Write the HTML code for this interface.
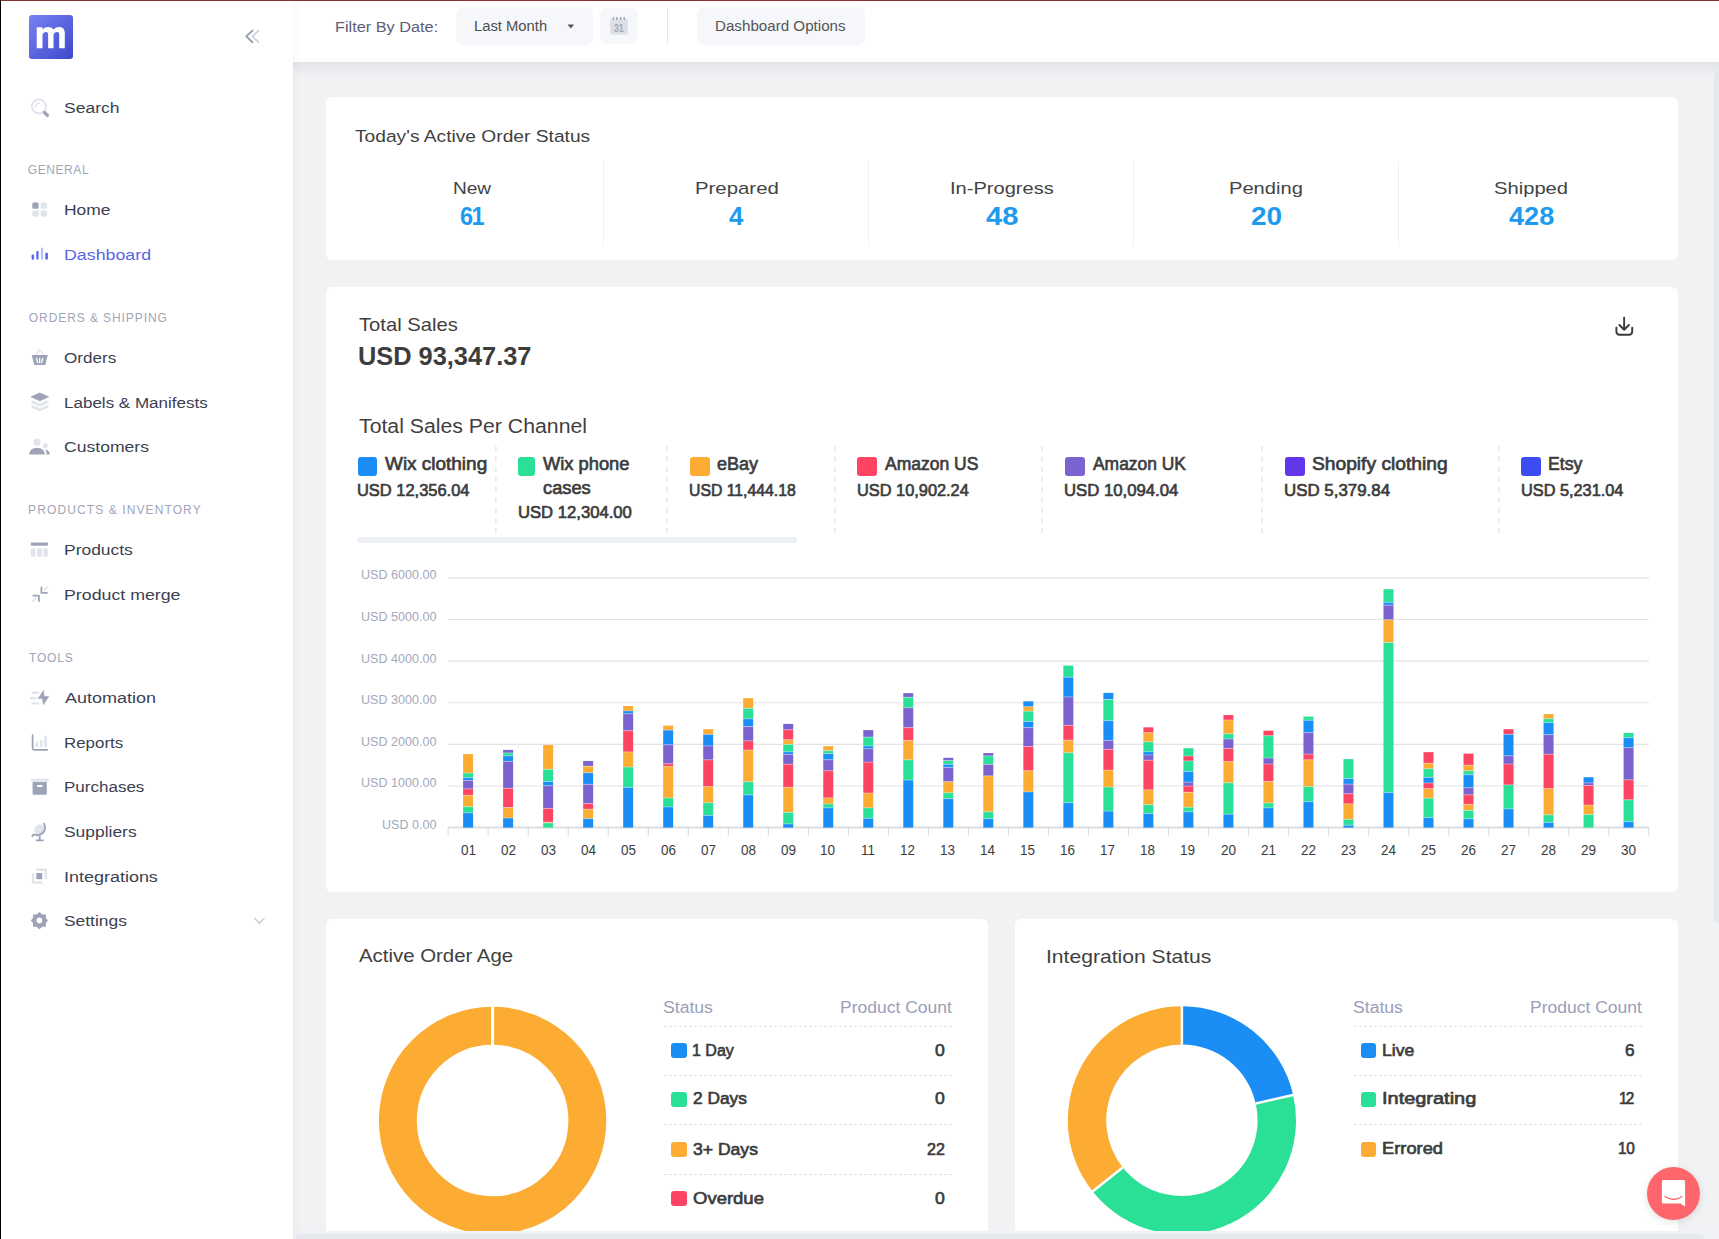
<!DOCTYPE html><html><head><meta charset="utf-8"><style>
html,body{margin:0;padding:0;}
body{width:1719px;height:1239px;overflow:hidden;position:relative;background:#f1f2f4;font-family:'Liberation Sans',sans-serif;}
.abs{position:absolute;}
.t{position:absolute;line-height:1;white-space:nowrap;transform-origin:0 0;font-family:'Liberation Sans',sans-serif;}
.card{position:absolute;background:#fff;border-radius:6px;}
.btn{position:absolute;background:#f6f7fa;border-radius:7px;}

</style></head><body>
<div class="abs" style="left:293px;top:62px;width:1426px;height:14px;background:linear-gradient(#e3e4e8,#f0f1f4)"></div>
<div class="card" style="left:326px;top:97px;width:1352px;height:163px"></div>
<div class="card" style="left:326px;top:287px;width:1352px;height:605px"></div>
<div class="card" style="left:326px;top:919px;width:662px;height:330px"></div>
<div class="card" style="left:1015px;top:919px;width:663px;height:330px"></div>
<div class="abs" style="left:603.0px;top:161px;width:1px;height:85px;background:#eef0f5"></div>
<div class="abs" style="left:867.9px;top:161px;width:1px;height:85px;background:#eef0f5"></div>
<div class="abs" style="left:1133.0px;top:161px;width:1px;height:85px;background:#eef0f5"></div>
<div class="abs" style="left:1397.8px;top:161px;width:1px;height:85px;background:#eef0f5"></div>
<svg class="abs" style="left:0;top:0" width="1719" height="600"><line x1="495.9" y1="446" x2="495.9" y2="536" stroke="#e3e6ec" stroke-width="1.4" stroke-dasharray="5.6 4.65"/><line x1="666.9" y1="446" x2="666.9" y2="536" stroke="#e3e6ec" stroke-width="1.4" stroke-dasharray="5.6 4.65"/><line x1="835.1" y1="446" x2="835.1" y2="536" stroke="#e3e6ec" stroke-width="1.4" stroke-dasharray="5.6 4.65"/><line x1="1041.9" y1="446" x2="1041.9" y2="536" stroke="#e3e6ec" stroke-width="1.4" stroke-dasharray="5.6 4.65"/><line x1="1262.0" y1="446" x2="1262.0" y2="536" stroke="#e3e6ec" stroke-width="1.4" stroke-dasharray="5.6 4.65"/><line x1="1498.8" y1="446" x2="1498.8" y2="536" stroke="#e3e6ec" stroke-width="1.4" stroke-dasharray="5.6 4.65"/></svg>
<div class="abs" style="left:358px;top:457px;width:19px;height:19px;border-radius:3px;background:#1a8ef5"></div>
<div class="abs" style="left:518px;top:457px;width:17px;height:19px;border-radius:3px;background:#2adf96"></div>
<div class="abs" style="left:690px;top:457px;width:20px;height:19px;border-radius:3px;background:#fcab33"></div>
<div class="abs" style="left:857px;top:457px;width:20px;height:19px;border-radius:3px;background:#fd4563"></div>
<div class="abs" style="left:1065px;top:457px;width:20px;height:19px;border-radius:3px;background:#7a62cf"></div>
<div class="abs" style="left:1285px;top:457px;width:20px;height:19px;border-radius:3px;background:#6236ea"></div>
<div class="abs" style="left:1521px;top:457px;width:20px;height:19px;border-radius:3px;background:#3d4cf2"></div>
<div class="abs" style="left:357px;top:537px;width:440px;height:6px;border-radius:3px;background:#eceff3"></div>
<svg class="abs" style="left:0;top:0" width="1719" height="1239"><line x1="448" y1="827.60" x2="1649" y2="827.60" stroke="#dedede" stroke-width="2"/><line x1="448" y1="785.98" x2="1649" y2="785.98" stroke="#e3e3e3" stroke-width="1.2"/><line x1="448" y1="744.36" x2="1649" y2="744.36" stroke="#e3e3e3" stroke-width="1.2"/><line x1="448" y1="702.74" x2="1649" y2="702.74" stroke="#e3e3e3" stroke-width="1.2"/><line x1="448" y1="661.12" x2="1649" y2="661.12" stroke="#e3e3e3" stroke-width="1.2"/><line x1="448" y1="619.50" x2="1649" y2="619.50" stroke="#e3e3e3" stroke-width="1.2"/><line x1="448" y1="577.88" x2="1649" y2="577.88" stroke="#e3e3e3" stroke-width="1.2"/><line x1="448.2" y1="827.60" x2="448.2" y2="835.60" stroke="#dedede" stroke-width="1.2"/><line x1="488.217" y1="827.60" x2="488.217" y2="835.60" stroke="#dedede" stroke-width="1.2"/><line x1="528.234" y1="827.60" x2="528.234" y2="835.60" stroke="#dedede" stroke-width="1.2"/><line x1="568.251" y1="827.60" x2="568.251" y2="835.60" stroke="#dedede" stroke-width="1.2"/><line x1="608.268" y1="827.60" x2="608.268" y2="835.60" stroke="#dedede" stroke-width="1.2"/><line x1="648.285" y1="827.60" x2="648.285" y2="835.60" stroke="#dedede" stroke-width="1.2"/><line x1="688.302" y1="827.60" x2="688.302" y2="835.60" stroke="#dedede" stroke-width="1.2"/><line x1="728.319" y1="827.60" x2="728.319" y2="835.60" stroke="#dedede" stroke-width="1.2"/><line x1="768.336" y1="827.60" x2="768.336" y2="835.60" stroke="#dedede" stroke-width="1.2"/><line x1="808.3530000000001" y1="827.60" x2="808.3530000000001" y2="835.60" stroke="#dedede" stroke-width="1.2"/><line x1="848.37" y1="827.60" x2="848.37" y2="835.60" stroke="#dedede" stroke-width="1.2"/><line x1="888.387" y1="827.60" x2="888.387" y2="835.60" stroke="#dedede" stroke-width="1.2"/><line x1="928.404" y1="827.60" x2="928.404" y2="835.60" stroke="#dedede" stroke-width="1.2"/><line x1="968.421" y1="827.60" x2="968.421" y2="835.60" stroke="#dedede" stroke-width="1.2"/><line x1="1008.4380000000001" y1="827.60" x2="1008.4380000000001" y2="835.60" stroke="#dedede" stroke-width="1.2"/><line x1="1048.455" y1="827.60" x2="1048.455" y2="835.60" stroke="#dedede" stroke-width="1.2"/><line x1="1088.472" y1="827.60" x2="1088.472" y2="835.60" stroke="#dedede" stroke-width="1.2"/><line x1="1128.489" y1="827.60" x2="1128.489" y2="835.60" stroke="#dedede" stroke-width="1.2"/><line x1="1168.506" y1="827.60" x2="1168.506" y2="835.60" stroke="#dedede" stroke-width="1.2"/><line x1="1208.5230000000001" y1="827.60" x2="1208.5230000000001" y2="835.60" stroke="#dedede" stroke-width="1.2"/><line x1="1248.54" y1="827.60" x2="1248.54" y2="835.60" stroke="#dedede" stroke-width="1.2"/><line x1="1288.557" y1="827.60" x2="1288.557" y2="835.60" stroke="#dedede" stroke-width="1.2"/><line x1="1328.574" y1="827.60" x2="1328.574" y2="835.60" stroke="#dedede" stroke-width="1.2"/><line x1="1368.5910000000001" y1="827.60" x2="1368.5910000000001" y2="835.60" stroke="#dedede" stroke-width="1.2"/><line x1="1408.6080000000002" y1="827.60" x2="1408.6080000000002" y2="835.60" stroke="#dedede" stroke-width="1.2"/><line x1="1448.625" y1="827.60" x2="1448.625" y2="835.60" stroke="#dedede" stroke-width="1.2"/><line x1="1488.642" y1="827.60" x2="1488.642" y2="835.60" stroke="#dedede" stroke-width="1.2"/><line x1="1528.659" y1="827.60" x2="1528.659" y2="835.60" stroke="#dedede" stroke-width="1.2"/><line x1="1568.6760000000002" y1="827.60" x2="1568.6760000000002" y2="835.60" stroke="#dedede" stroke-width="1.2"/><line x1="1608.6930000000002" y1="827.60" x2="1608.6930000000002" y2="835.60" stroke="#dedede" stroke-width="1.2"/><line x1="1648.71" y1="827.60" x2="1648.71" y2="835.60" stroke="#dedede" stroke-width="1.2"/><rect x="463.1" y="754.07" width="10" height="18.98" fill="#fcab33"/><rect x="463.1" y="773.05" width="10" height="4.52" fill="#2adf96"/><rect x="463.1" y="777.57" width="10" height="2.82" fill="#1a8ef5"/><rect x="463.1" y="780.40" width="10" height="8.47" fill="#7a62cf"/><rect x="463.1" y="788.87" width="10" height="6.55" fill="#fd4563"/><rect x="463.1" y="795.42" width="10" height="11.30" fill="#fcab33"/><rect x="463.1" y="806.72" width="10" height="6.10" fill="#2adf96"/><rect x="463.1" y="812.82" width="10" height="14.78" fill="#1a8ef5"/><rect x="463.1" y="772.55" width="10" height="1" fill="#ffffff" fill-opacity="0.35"/><rect x="463.1" y="777.07" width="10" height="1" fill="#ffffff" fill-opacity="0.35"/><rect x="463.1" y="779.90" width="10" height="1" fill="#ffffff" fill-opacity="0.35"/><rect x="463.1" y="788.37" width="10" height="1" fill="#ffffff" fill-opacity="0.35"/><rect x="463.1" y="794.92" width="10" height="1" fill="#ffffff" fill-opacity="0.35"/><rect x="463.1" y="806.22" width="10" height="1" fill="#ffffff" fill-opacity="0.35"/><rect x="463.1" y="812.32" width="10" height="1" fill="#ffffff" fill-opacity="0.35"/><rect x="503.117" y="749.89" width="10" height="3.05" fill="#7a62cf"/><rect x="503.117" y="752.94" width="10" height="2.94" fill="#2adf96"/><rect x="503.117" y="755.88" width="10" height="5.54" fill="#1a8ef5"/><rect x="503.117" y="761.41" width="10" height="26.89" fill="#7a62cf"/><rect x="503.117" y="788.31" width="10" height="19.21" fill="#fd4563"/><rect x="503.117" y="807.51" width="10" height="10.51" fill="#fcab33"/><rect x="503.117" y="818.02" width="10" height="9.58" fill="#1a8ef5"/><rect x="503.117" y="752.44" width="10" height="1" fill="#ffffff" fill-opacity="0.35"/><rect x="503.117" y="755.38" width="10" height="1" fill="#ffffff" fill-opacity="0.35"/><rect x="503.117" y="760.91" width="10" height="1" fill="#ffffff" fill-opacity="0.35"/><rect x="503.117" y="787.81" width="10" height="1" fill="#ffffff" fill-opacity="0.35"/><rect x="503.117" y="807.01" width="10" height="1" fill="#ffffff" fill-opacity="0.35"/><rect x="503.117" y="817.52" width="10" height="1" fill="#ffffff" fill-opacity="0.35"/><rect x="543.134" y="745.03" width="10" height="24.29" fill="#fcab33"/><rect x="543.134" y="769.32" width="10" height="12.20" fill="#2adf96"/><rect x="543.134" y="781.53" width="10" height="4.18" fill="#1a8ef5"/><rect x="543.134" y="785.71" width="10" height="22.71" fill="#7a62cf"/><rect x="543.134" y="808.42" width="10" height="13.79" fill="#fd4563"/><rect x="543.134" y="822.20" width="10" height="0.79" fill="#fcab33"/><rect x="543.134" y="822.99" width="10" height="4.61" fill="#2adf96"/><rect x="543.134" y="768.82" width="10" height="1" fill="#ffffff" fill-opacity="0.35"/><rect x="543.134" y="781.03" width="10" height="1" fill="#ffffff" fill-opacity="0.35"/><rect x="543.134" y="785.21" width="10" height="1" fill="#ffffff" fill-opacity="0.35"/><rect x="543.134" y="807.92" width="10" height="1" fill="#ffffff" fill-opacity="0.35"/><rect x="543.134" y="821.70" width="10" height="1" fill="#ffffff" fill-opacity="0.35"/><rect x="543.134" y="822.49" width="10" height="1" fill="#ffffff" fill-opacity="0.35"/><rect x="583.1510000000001" y="760.96" width="10" height="5.31" fill="#7a62cf"/><rect x="583.1510000000001" y="766.27" width="10" height="6.55" fill="#fcab33"/><rect x="583.1510000000001" y="772.82" width="10" height="11.53" fill="#1a8ef5"/><rect x="583.1510000000001" y="784.35" width="10" height="19.21" fill="#7a62cf"/><rect x="583.1510000000001" y="803.56" width="10" height="5.65" fill="#fd4563"/><rect x="583.1510000000001" y="809.21" width="10" height="9.38" fill="#fcab33"/><rect x="583.1510000000001" y="818.59" width="10" height="9.01" fill="#1a8ef5"/><rect x="583.1510000000001" y="765.77" width="10" height="1" fill="#ffffff" fill-opacity="0.35"/><rect x="583.1510000000001" y="772.32" width="10" height="1" fill="#ffffff" fill-opacity="0.35"/><rect x="583.1510000000001" y="783.85" width="10" height="1" fill="#ffffff" fill-opacity="0.35"/><rect x="583.1510000000001" y="803.06" width="10" height="1" fill="#ffffff" fill-opacity="0.35"/><rect x="583.1510000000001" y="808.71" width="10" height="1" fill="#ffffff" fill-opacity="0.35"/><rect x="583.1510000000001" y="818.09" width="10" height="1" fill="#ffffff" fill-opacity="0.35"/><rect x="623.168" y="706.05" width="10" height="4.86" fill="#fcab33"/><rect x="623.168" y="710.90" width="10" height="2.82" fill="#1a8ef5"/><rect x="623.168" y="713.73" width="10" height="16.95" fill="#7a62cf"/><rect x="623.168" y="730.68" width="10" height="21.24" fill="#fd4563"/><rect x="623.168" y="751.92" width="10" height="15.14" fill="#fcab33"/><rect x="623.168" y="767.06" width="10" height="20.34" fill="#2adf96"/><rect x="623.168" y="787.40" width="10" height="40.20" fill="#1a8ef5"/><rect x="623.168" y="710.40" width="10" height="1" fill="#ffffff" fill-opacity="0.35"/><rect x="623.168" y="713.23" width="10" height="1" fill="#ffffff" fill-opacity="0.35"/><rect x="623.168" y="730.18" width="10" height="1" fill="#ffffff" fill-opacity="0.35"/><rect x="623.168" y="751.42" width="10" height="1" fill="#ffffff" fill-opacity="0.35"/><rect x="623.168" y="766.56" width="10" height="1" fill="#ffffff" fill-opacity="0.35"/><rect x="623.168" y="786.90" width="10" height="1" fill="#ffffff" fill-opacity="0.35"/><rect x="663.1850000000001" y="725.59" width="10" height="4.52" fill="#fcab33"/><rect x="663.1850000000001" y="730.11" width="10" height="14.69" fill="#1a8ef5"/><rect x="663.1850000000001" y="744.80" width="10" height="18.98" fill="#7a62cf"/><rect x="663.1850000000001" y="763.79" width="10" height="2.82" fill="#fd4563"/><rect x="663.1850000000001" y="766.61" width="10" height="31.30" fill="#fcab33"/><rect x="663.1850000000001" y="797.91" width="10" height="9.04" fill="#2adf96"/><rect x="663.1850000000001" y="806.95" width="10" height="20.65" fill="#1a8ef5"/><rect x="663.1850000000001" y="729.61" width="10" height="1" fill="#ffffff" fill-opacity="0.35"/><rect x="663.1850000000001" y="744.30" width="10" height="1" fill="#ffffff" fill-opacity="0.35"/><rect x="663.1850000000001" y="763.29" width="10" height="1" fill="#ffffff" fill-opacity="0.35"/><rect x="663.1850000000001" y="766.11" width="10" height="1" fill="#ffffff" fill-opacity="0.35"/><rect x="663.1850000000001" y="797.41" width="10" height="1" fill="#ffffff" fill-opacity="0.35"/><rect x="663.1850000000001" y="806.45" width="10" height="1" fill="#ffffff" fill-opacity="0.35"/><rect x="703.202" y="729.21" width="10" height="5.20" fill="#fcab33"/><rect x="703.202" y="734.41" width="10" height="11.53" fill="#1a8ef5"/><rect x="703.202" y="745.93" width="10" height="13.90" fill="#7a62cf"/><rect x="703.202" y="759.83" width="10" height="26.78" fill="#fd4563"/><rect x="703.202" y="786.61" width="10" height="16.16" fill="#fcab33"/><rect x="703.202" y="802.77" width="10" height="12.66" fill="#2adf96"/><rect x="703.202" y="815.42" width="10" height="12.18" fill="#1a8ef5"/><rect x="703.202" y="733.91" width="10" height="1" fill="#ffffff" fill-opacity="0.35"/><rect x="703.202" y="745.43" width="10" height="1" fill="#ffffff" fill-opacity="0.35"/><rect x="703.202" y="759.33" width="10" height="1" fill="#ffffff" fill-opacity="0.35"/><rect x="703.202" y="786.11" width="10" height="1" fill="#ffffff" fill-opacity="0.35"/><rect x="703.202" y="802.27" width="10" height="1" fill="#ffffff" fill-opacity="0.35"/><rect x="703.202" y="814.92" width="10" height="1" fill="#ffffff" fill-opacity="0.35"/><rect x="743.219" y="698.14" width="10" height="10.17" fill="#fcab33"/><rect x="743.219" y="708.31" width="10" height="10.51" fill="#2adf96"/><rect x="743.219" y="718.81" width="10" height="7.68" fill="#1a8ef5"/><rect x="743.219" y="726.50" width="10" height="14.35" fill="#7a62cf"/><rect x="743.219" y="740.85" width="10" height="9.27" fill="#fd4563"/><rect x="743.219" y="750.11" width="10" height="31.64" fill="#fcab33"/><rect x="743.219" y="781.75" width="10" height="13.11" fill="#2adf96"/><rect x="743.219" y="794.86" width="10" height="32.74" fill="#1a8ef5"/><rect x="743.219" y="707.81" width="10" height="1" fill="#ffffff" fill-opacity="0.35"/><rect x="743.219" y="718.31" width="10" height="1" fill="#ffffff" fill-opacity="0.35"/><rect x="743.219" y="726.00" width="10" height="1" fill="#ffffff" fill-opacity="0.35"/><rect x="743.219" y="740.35" width="10" height="1" fill="#ffffff" fill-opacity="0.35"/><rect x="743.219" y="749.61" width="10" height="1" fill="#ffffff" fill-opacity="0.35"/><rect x="743.219" y="781.25" width="10" height="1" fill="#ffffff" fill-opacity="0.35"/><rect x="743.219" y="794.36" width="10" height="1" fill="#ffffff" fill-opacity="0.35"/><rect x="783.2360000000001" y="723.90" width="10" height="5.88" fill="#7a62cf"/><rect x="783.2360000000001" y="729.77" width="10" height="9.94" fill="#fd4563"/><rect x="783.2360000000001" y="739.72" width="10" height="4.75" fill="#fcab33"/><rect x="783.2360000000001" y="744.46" width="10" height="7.34" fill="#2adf96"/><rect x="783.2360000000001" y="751.81" width="10" height="2.60" fill="#1a8ef5"/><rect x="783.2360000000001" y="754.41" width="10" height="9.83" fill="#7a62cf"/><rect x="783.2360000000001" y="764.24" width="10" height="23.16" fill="#fd4563"/><rect x="783.2360000000001" y="787.40" width="10" height="24.97" fill="#fcab33"/><rect x="783.2360000000001" y="812.37" width="10" height="11.53" fill="#2adf96"/><rect x="783.2360000000001" y="823.90" width="10" height="3.70" fill="#1a8ef5"/><rect x="783.2360000000001" y="729.27" width="10" height="1" fill="#ffffff" fill-opacity="0.35"/><rect x="783.2360000000001" y="739.22" width="10" height="1" fill="#ffffff" fill-opacity="0.35"/><rect x="783.2360000000001" y="743.96" width="10" height="1" fill="#ffffff" fill-opacity="0.35"/><rect x="783.2360000000001" y="751.31" width="10" height="1" fill="#ffffff" fill-opacity="0.35"/><rect x="783.2360000000001" y="753.91" width="10" height="1" fill="#ffffff" fill-opacity="0.35"/><rect x="783.2360000000001" y="763.74" width="10" height="1" fill="#ffffff" fill-opacity="0.35"/><rect x="783.2360000000001" y="786.90" width="10" height="1" fill="#ffffff" fill-opacity="0.35"/><rect x="783.2360000000001" y="811.87" width="10" height="1" fill="#ffffff" fill-opacity="0.35"/><rect x="783.2360000000001" y="823.40" width="10" height="1" fill="#ffffff" fill-opacity="0.35"/><rect x="823.253" y="746.16" width="10" height="4.52" fill="#fcab33"/><rect x="823.253" y="750.68" width="10" height="2.94" fill="#2adf96"/><rect x="823.253" y="753.62" width="10" height="6.10" fill="#1a8ef5"/><rect x="823.253" y="759.72" width="10" height="11.07" fill="#7a62cf"/><rect x="823.253" y="770.79" width="10" height="27.12" fill="#fd4563"/><rect x="823.253" y="797.91" width="10" height="5.99" fill="#fcab33"/><rect x="823.253" y="803.90" width="10" height="3.95" fill="#2adf96"/><rect x="823.253" y="807.85" width="10" height="19.75" fill="#1a8ef5"/><rect x="823.253" y="750.18" width="10" height="1" fill="#ffffff" fill-opacity="0.35"/><rect x="823.253" y="753.12" width="10" height="1" fill="#ffffff" fill-opacity="0.35"/><rect x="823.253" y="759.22" width="10" height="1" fill="#ffffff" fill-opacity="0.35"/><rect x="823.253" y="770.29" width="10" height="1" fill="#ffffff" fill-opacity="0.35"/><rect x="823.253" y="797.41" width="10" height="1" fill="#ffffff" fill-opacity="0.35"/><rect x="823.253" y="803.40" width="10" height="1" fill="#ffffff" fill-opacity="0.35"/><rect x="823.253" y="807.35" width="10" height="1" fill="#ffffff" fill-opacity="0.35"/><rect x="863.27" y="730.11" width="10" height="7.01" fill="#7a62cf"/><rect x="863.27" y="737.12" width="10" height="8.81" fill="#2adf96"/><rect x="863.27" y="745.93" width="10" height="2.82" fill="#1a8ef5"/><rect x="863.27" y="748.76" width="10" height="13.33" fill="#7a62cf"/><rect x="863.27" y="762.09" width="10" height="30.96" fill="#fd4563"/><rect x="863.27" y="793.05" width="10" height="14.80" fill="#fcab33"/><rect x="863.27" y="807.85" width="10" height="10.40" fill="#2adf96"/><rect x="863.27" y="818.25" width="10" height="9.35" fill="#1a8ef5"/><rect x="863.27" y="736.62" width="10" height="1" fill="#ffffff" fill-opacity="0.35"/><rect x="863.27" y="745.43" width="10" height="1" fill="#ffffff" fill-opacity="0.35"/><rect x="863.27" y="748.26" width="10" height="1" fill="#ffffff" fill-opacity="0.35"/><rect x="863.27" y="761.59" width="10" height="1" fill="#ffffff" fill-opacity="0.35"/><rect x="863.27" y="792.55" width="10" height="1" fill="#ffffff" fill-opacity="0.35"/><rect x="863.27" y="807.35" width="10" height="1" fill="#ffffff" fill-opacity="0.35"/><rect x="863.27" y="817.75" width="10" height="1" fill="#ffffff" fill-opacity="0.35"/><rect x="903.287" y="693.16" width="10" height="4.18" fill="#7a62cf"/><rect x="903.287" y="697.34" width="10" height="10.40" fill="#2adf96"/><rect x="903.287" y="707.74" width="10" height="19.89" fill="#7a62cf"/><rect x="903.287" y="727.63" width="10" height="12.88" fill="#fd4563"/><rect x="903.287" y="740.51" width="10" height="19.32" fill="#fcab33"/><rect x="903.287" y="759.83" width="10" height="20.23" fill="#2adf96"/><rect x="903.287" y="780.06" width="10" height="47.54" fill="#1a8ef5"/><rect x="903.287" y="696.84" width="10" height="1" fill="#ffffff" fill-opacity="0.35"/><rect x="903.287" y="707.24" width="10" height="1" fill="#ffffff" fill-opacity="0.35"/><rect x="903.287" y="727.13" width="10" height="1" fill="#ffffff" fill-opacity="0.35"/><rect x="903.287" y="740.01" width="10" height="1" fill="#ffffff" fill-opacity="0.35"/><rect x="903.287" y="759.33" width="10" height="1" fill="#ffffff" fill-opacity="0.35"/><rect x="903.287" y="779.56" width="10" height="1" fill="#ffffff" fill-opacity="0.35"/><rect x="943.3040000000001" y="757.80" width="10" height="2.82" fill="#7a62cf"/><rect x="943.3040000000001" y="760.62" width="10" height="3.73" fill="#2adf96"/><rect x="943.3040000000001" y="764.35" width="10" height="3.05" fill="#1a8ef5"/><rect x="943.3040000000001" y="767.40" width="10" height="14.35" fill="#7a62cf"/><rect x="943.3040000000001" y="781.75" width="10" height="11.07" fill="#fcab33"/><rect x="943.3040000000001" y="792.82" width="10" height="5.88" fill="#2adf96"/><rect x="943.3040000000001" y="798.70" width="10" height="28.90" fill="#1a8ef5"/><rect x="943.3040000000001" y="760.12" width="10" height="1" fill="#ffffff" fill-opacity="0.35"/><rect x="943.3040000000001" y="763.85" width="10" height="1" fill="#ffffff" fill-opacity="0.35"/><rect x="943.3040000000001" y="766.90" width="10" height="1" fill="#ffffff" fill-opacity="0.35"/><rect x="943.3040000000001" y="781.25" width="10" height="1" fill="#ffffff" fill-opacity="0.35"/><rect x="943.3040000000001" y="792.32" width="10" height="1" fill="#ffffff" fill-opacity="0.35"/><rect x="943.3040000000001" y="798.20" width="10" height="1" fill="#ffffff" fill-opacity="0.35"/><rect x="983.321" y="753.05" width="10" height="2.82" fill="#7a62cf"/><rect x="983.321" y="755.88" width="10" height="8.47" fill="#2adf96"/><rect x="983.321" y="764.35" width="10" height="11.53" fill="#7a62cf"/><rect x="983.321" y="775.88" width="10" height="35.93" fill="#fcab33"/><rect x="983.321" y="811.81" width="10" height="6.78" fill="#2adf96"/><rect x="983.321" y="818.59" width="10" height="9.01" fill="#1a8ef5"/><rect x="983.321" y="755.38" width="10" height="1" fill="#ffffff" fill-opacity="0.35"/><rect x="983.321" y="763.85" width="10" height="1" fill="#ffffff" fill-opacity="0.35"/><rect x="983.321" y="775.38" width="10" height="1" fill="#ffffff" fill-opacity="0.35"/><rect x="983.321" y="811.31" width="10" height="1" fill="#ffffff" fill-opacity="0.35"/><rect x="983.321" y="818.09" width="10" height="1" fill="#ffffff" fill-opacity="0.35"/><rect x="1023.3380000000001" y="701.30" width="10" height="5.42" fill="#1a8ef5"/><rect x="1023.3380000000001" y="706.72" width="10" height="4.41" fill="#fcab33"/><rect x="1023.3380000000001" y="711.13" width="10" height="10.28" fill="#2adf96"/><rect x="1023.3380000000001" y="721.41" width="10" height="6.21" fill="#1a8ef5"/><rect x="1023.3380000000001" y="727.63" width="10" height="18.87" fill="#7a62cf"/><rect x="1023.3380000000001" y="746.50" width="10" height="24.29" fill="#fd4563"/><rect x="1023.3380000000001" y="770.79" width="10" height="21.13" fill="#fcab33"/><rect x="1023.3380000000001" y="791.92" width="10" height="35.68" fill="#1a8ef5"/><rect x="1023.3380000000001" y="706.22" width="10" height="1" fill="#ffffff" fill-opacity="0.35"/><rect x="1023.3380000000001" y="710.63" width="10" height="1" fill="#ffffff" fill-opacity="0.35"/><rect x="1023.3380000000001" y="720.91" width="10" height="1" fill="#ffffff" fill-opacity="0.35"/><rect x="1023.3380000000001" y="727.13" width="10" height="1" fill="#ffffff" fill-opacity="0.35"/><rect x="1023.3380000000001" y="746.00" width="10" height="1" fill="#ffffff" fill-opacity="0.35"/><rect x="1023.3380000000001" y="770.29" width="10" height="1" fill="#ffffff" fill-opacity="0.35"/><rect x="1023.3380000000001" y="791.42" width="10" height="1" fill="#ffffff" fill-opacity="0.35"/><rect x="1063.355" y="665.59" width="10" height="11.58" fill="#2adf96"/><rect x="1063.355" y="677.18" width="10" height="19.77" fill="#1a8ef5"/><rect x="1063.355" y="696.95" width="10" height="28.39" fill="#7a62cf"/><rect x="1063.355" y="725.34" width="10" height="14.83" fill="#fd4563"/><rect x="1063.355" y="740.17" width="10" height="12.57" fill="#fcab33"/><rect x="1063.355" y="752.74" width="10" height="49.86" fill="#2adf96"/><rect x="1063.355" y="802.60" width="10" height="25.00" fill="#1a8ef5"/><rect x="1063.355" y="676.68" width="10" height="1" fill="#ffffff" fill-opacity="0.35"/><rect x="1063.355" y="696.45" width="10" height="1" fill="#ffffff" fill-opacity="0.35"/><rect x="1063.355" y="724.84" width="10" height="1" fill="#ffffff" fill-opacity="0.35"/><rect x="1063.355" y="739.67" width="10" height="1" fill="#ffffff" fill-opacity="0.35"/><rect x="1063.355" y="752.24" width="10" height="1" fill="#ffffff" fill-opacity="0.35"/><rect x="1063.355" y="802.10" width="10" height="1" fill="#ffffff" fill-opacity="0.35"/><rect x="1103.372" y="692.85" width="10" height="6.64" fill="#1a8ef5"/><rect x="1103.372" y="699.49" width="10" height="21.19" fill="#2adf96"/><rect x="1103.372" y="720.68" width="10" height="19.77" fill="#1a8ef5"/><rect x="1103.372" y="740.45" width="10" height="8.90" fill="#7a62cf"/><rect x="1103.372" y="749.35" width="10" height="20.76" fill="#fd4563"/><rect x="1103.372" y="770.11" width="10" height="16.95" fill="#fcab33"/><rect x="1103.372" y="787.06" width="10" height="24.01" fill="#2adf96"/><rect x="1103.372" y="811.07" width="10" height="16.53" fill="#1a8ef5"/><rect x="1103.372" y="698.99" width="10" height="1" fill="#ffffff" fill-opacity="0.35"/><rect x="1103.372" y="720.18" width="10" height="1" fill="#ffffff" fill-opacity="0.35"/><rect x="1103.372" y="739.95" width="10" height="1" fill="#ffffff" fill-opacity="0.35"/><rect x="1103.372" y="748.85" width="10" height="1" fill="#ffffff" fill-opacity="0.35"/><rect x="1103.372" y="769.61" width="10" height="1" fill="#ffffff" fill-opacity="0.35"/><rect x="1103.372" y="786.56" width="10" height="1" fill="#ffffff" fill-opacity="0.35"/><rect x="1103.372" y="810.57" width="10" height="1" fill="#ffffff" fill-opacity="0.35"/><rect x="1143.3890000000001" y="727.32" width="10" height="5.37" fill="#fd4563"/><rect x="1143.3890000000001" y="732.68" width="10" height="9.18" fill="#fcab33"/><rect x="1143.3890000000001" y="741.86" width="10" height="9.89" fill="#2adf96"/><rect x="1143.3890000000001" y="751.75" width="10" height="3.25" fill="#1a8ef5"/><rect x="1143.3890000000001" y="755.00" width="10" height="5.23" fill="#7a62cf"/><rect x="1143.3890000000001" y="760.23" width="10" height="29.66" fill="#fd4563"/><rect x="1143.3890000000001" y="789.89" width="10" height="14.83" fill="#fcab33"/><rect x="1143.3890000000001" y="804.72" width="10" height="8.76" fill="#2adf96"/><rect x="1143.3890000000001" y="813.47" width="10" height="14.13" fill="#1a8ef5"/><rect x="1143.3890000000001" y="732.18" width="10" height="1" fill="#ffffff" fill-opacity="0.35"/><rect x="1143.3890000000001" y="741.36" width="10" height="1" fill="#ffffff" fill-opacity="0.35"/><rect x="1143.3890000000001" y="751.25" width="10" height="1" fill="#ffffff" fill-opacity="0.35"/><rect x="1143.3890000000001" y="754.50" width="10" height="1" fill="#ffffff" fill-opacity="0.35"/><rect x="1143.3890000000001" y="759.73" width="10" height="1" fill="#ffffff" fill-opacity="0.35"/><rect x="1143.3890000000001" y="789.39" width="10" height="1" fill="#ffffff" fill-opacity="0.35"/><rect x="1143.3890000000001" y="804.22" width="10" height="1" fill="#ffffff" fill-opacity="0.35"/><rect x="1143.3890000000001" y="812.97" width="10" height="1" fill="#ffffff" fill-opacity="0.35"/><rect x="1183.406" y="748.22" width="10" height="7.77" fill="#2adf96"/><rect x="1183.406" y="755.99" width="10" height="4.94" fill="#fd4563"/><rect x="1183.406" y="760.93" width="10" height="10.59" fill="#2adf96"/><rect x="1183.406" y="771.53" width="10" height="10.59" fill="#1a8ef5"/><rect x="1183.406" y="782.12" width="10" height="3.95" fill="#7a62cf"/><rect x="1183.406" y="786.07" width="10" height="6.21" fill="#fd4563"/><rect x="1183.406" y="792.29" width="10" height="14.97" fill="#fcab33"/><rect x="1183.406" y="807.26" width="10" height="4.52" fill="#2adf96"/><rect x="1183.406" y="811.78" width="10" height="15.82" fill="#1a8ef5"/><rect x="1183.406" y="755.49" width="10" height="1" fill="#ffffff" fill-opacity="0.35"/><rect x="1183.406" y="760.43" width="10" height="1" fill="#ffffff" fill-opacity="0.35"/><rect x="1183.406" y="771.03" width="10" height="1" fill="#ffffff" fill-opacity="0.35"/><rect x="1183.406" y="781.62" width="10" height="1" fill="#ffffff" fill-opacity="0.35"/><rect x="1183.406" y="785.57" width="10" height="1" fill="#ffffff" fill-opacity="0.35"/><rect x="1183.406" y="791.79" width="10" height="1" fill="#ffffff" fill-opacity="0.35"/><rect x="1183.406" y="806.76" width="10" height="1" fill="#ffffff" fill-opacity="0.35"/><rect x="1183.406" y="811.28" width="10" height="1" fill="#ffffff" fill-opacity="0.35"/><rect x="1223.4230000000002" y="715.03" width="10" height="4.94" fill="#fd4563"/><rect x="1223.4230000000002" y="719.97" width="10" height="13.84" fill="#fcab33"/><rect x="1223.4230000000002" y="733.81" width="10" height="5.23" fill="#2adf96"/><rect x="1223.4230000000002" y="739.04" width="10" height="9.46" fill="#7a62cf"/><rect x="1223.4230000000002" y="748.50" width="10" height="13.14" fill="#fd4563"/><rect x="1223.4230000000002" y="761.64" width="10" height="21.19" fill="#fcab33"/><rect x="1223.4230000000002" y="782.82" width="10" height="31.36" fill="#2adf96"/><rect x="1223.4230000000002" y="814.18" width="10" height="13.42" fill="#1a8ef5"/><rect x="1223.4230000000002" y="719.47" width="10" height="1" fill="#ffffff" fill-opacity="0.35"/><rect x="1223.4230000000002" y="733.31" width="10" height="1" fill="#ffffff" fill-opacity="0.35"/><rect x="1223.4230000000002" y="738.54" width="10" height="1" fill="#ffffff" fill-opacity="0.35"/><rect x="1223.4230000000002" y="748.00" width="10" height="1" fill="#ffffff" fill-opacity="0.35"/><rect x="1223.4230000000002" y="761.14" width="10" height="1" fill="#ffffff" fill-opacity="0.35"/><rect x="1223.4230000000002" y="782.32" width="10" height="1" fill="#ffffff" fill-opacity="0.35"/><rect x="1223.4230000000002" y="813.68" width="10" height="1" fill="#ffffff" fill-opacity="0.35"/><rect x="1263.44" y="730.68" width="10" height="5.08" fill="#fd4563"/><rect x="1263.44" y="735.76" width="10" height="22.26" fill="#2adf96"/><rect x="1263.44" y="758.02" width="10" height="5.99" fill="#7a62cf"/><rect x="1263.44" y="764.01" width="10" height="17.51" fill="#fd4563"/><rect x="1263.44" y="781.53" width="10" height="21.47" fill="#fcab33"/><rect x="1263.44" y="802.99" width="10" height="4.86" fill="#2adf96"/><rect x="1263.44" y="807.85" width="10" height="19.75" fill="#1a8ef5"/><rect x="1263.44" y="735.26" width="10" height="1" fill="#ffffff" fill-opacity="0.35"/><rect x="1263.44" y="757.52" width="10" height="1" fill="#ffffff" fill-opacity="0.35"/><rect x="1263.44" y="763.51" width="10" height="1" fill="#ffffff" fill-opacity="0.35"/><rect x="1263.44" y="781.03" width="10" height="1" fill="#ffffff" fill-opacity="0.35"/><rect x="1263.44" y="802.49" width="10" height="1" fill="#ffffff" fill-opacity="0.35"/><rect x="1263.44" y="807.35" width="10" height="1" fill="#ffffff" fill-opacity="0.35"/><rect x="1303.457" y="716.55" width="10" height="3.73" fill="#2adf96"/><rect x="1303.457" y="720.28" width="10" height="12.32" fill="#1a8ef5"/><rect x="1303.457" y="732.60" width="10" height="21.47" fill="#7a62cf"/><rect x="1303.457" y="754.07" width="10" height="5.76" fill="#fd4563"/><rect x="1303.457" y="759.83" width="10" height="26.78" fill="#fcab33"/><rect x="1303.457" y="786.61" width="10" height="15.03" fill="#2adf96"/><rect x="1303.457" y="801.64" width="10" height="25.96" fill="#1a8ef5"/><rect x="1303.457" y="719.78" width="10" height="1" fill="#ffffff" fill-opacity="0.35"/><rect x="1303.457" y="732.10" width="10" height="1" fill="#ffffff" fill-opacity="0.35"/><rect x="1303.457" y="753.57" width="10" height="1" fill="#ffffff" fill-opacity="0.35"/><rect x="1303.457" y="759.33" width="10" height="1" fill="#ffffff" fill-opacity="0.35"/><rect x="1303.457" y="786.11" width="10" height="1" fill="#ffffff" fill-opacity="0.35"/><rect x="1303.457" y="801.14" width="10" height="1" fill="#ffffff" fill-opacity="0.35"/><rect x="1343.4740000000002" y="759.15" width="10" height="19.32" fill="#2adf96"/><rect x="1343.4740000000002" y="778.47" width="10" height="5.65" fill="#1a8ef5"/><rect x="1343.4740000000002" y="784.12" width="10" height="9.60" fill="#7a62cf"/><rect x="1343.4740000000002" y="793.73" width="10" height="10.17" fill="#fd4563"/><rect x="1343.4740000000002" y="803.90" width="10" height="15.48" fill="#fcab33"/><rect x="1343.4740000000002" y="819.38" width="10" height="5.88" fill="#2adf96"/><rect x="1343.4740000000002" y="825.25" width="10" height="2.35" fill="#1a8ef5"/><rect x="1343.4740000000002" y="777.97" width="10" height="1" fill="#ffffff" fill-opacity="0.35"/><rect x="1343.4740000000002" y="783.62" width="10" height="1" fill="#ffffff" fill-opacity="0.35"/><rect x="1343.4740000000002" y="793.23" width="10" height="1" fill="#ffffff" fill-opacity="0.35"/><rect x="1343.4740000000002" y="803.40" width="10" height="1" fill="#ffffff" fill-opacity="0.35"/><rect x="1343.4740000000002" y="818.88" width="10" height="1" fill="#ffffff" fill-opacity="0.35"/><rect x="1343.4740000000002" y="824.75" width="10" height="1" fill="#ffffff" fill-opacity="0.35"/><rect x="1423.5080000000003" y="752.15" width="10" height="11.07" fill="#fd4563"/><rect x="1423.5080000000003" y="763.22" width="10" height="5.54" fill="#fcab33"/><rect x="1423.5080000000003" y="768.76" width="10" height="8.59" fill="#2adf96"/><rect x="1423.5080000000003" y="777.34" width="10" height="5.65" fill="#1a8ef5"/><rect x="1423.5080000000003" y="782.99" width="10" height="5.65" fill="#fd4563"/><rect x="1423.5080000000003" y="788.64" width="10" height="9.49" fill="#fcab33"/><rect x="1423.5080000000003" y="798.14" width="10" height="19.32" fill="#2adf96"/><rect x="1423.5080000000003" y="817.46" width="10" height="10.14" fill="#1a8ef5"/><rect x="1423.5080000000003" y="762.72" width="10" height="1" fill="#ffffff" fill-opacity="0.35"/><rect x="1423.5080000000003" y="768.26" width="10" height="1" fill="#ffffff" fill-opacity="0.35"/><rect x="1423.5080000000003" y="776.84" width="10" height="1" fill="#ffffff" fill-opacity="0.35"/><rect x="1423.5080000000003" y="782.49" width="10" height="1" fill="#ffffff" fill-opacity="0.35"/><rect x="1423.5080000000003" y="788.14" width="10" height="1" fill="#ffffff" fill-opacity="0.35"/><rect x="1423.5080000000003" y="797.64" width="10" height="1" fill="#ffffff" fill-opacity="0.35"/><rect x="1423.5080000000003" y="816.96" width="10" height="1" fill="#ffffff" fill-opacity="0.35"/><rect x="1463.525" y="753.62" width="10" height="11.53" fill="#fd4563"/><rect x="1463.525" y="765.14" width="10" height="5.65" fill="#fcab33"/><rect x="1463.525" y="770.79" width="10" height="3.95" fill="#2adf96"/><rect x="1463.525" y="774.75" width="10" height="12.99" fill="#1a8ef5"/><rect x="1463.525" y="787.74" width="10" height="7.12" fill="#7a62cf"/><rect x="1463.525" y="794.86" width="10" height="9.60" fill="#fd4563"/><rect x="1463.525" y="804.46" width="10" height="5.88" fill="#fcab33"/><rect x="1463.525" y="810.34" width="10" height="8.47" fill="#2adf96"/><rect x="1463.525" y="818.81" width="10" height="8.79" fill="#1a8ef5"/><rect x="1463.525" y="764.64" width="10" height="1" fill="#ffffff" fill-opacity="0.35"/><rect x="1463.525" y="770.29" width="10" height="1" fill="#ffffff" fill-opacity="0.35"/><rect x="1463.525" y="774.25" width="10" height="1" fill="#ffffff" fill-opacity="0.35"/><rect x="1463.525" y="787.24" width="10" height="1" fill="#ffffff" fill-opacity="0.35"/><rect x="1463.525" y="794.36" width="10" height="1" fill="#ffffff" fill-opacity="0.35"/><rect x="1463.525" y="803.96" width="10" height="1" fill="#ffffff" fill-opacity="0.35"/><rect x="1463.525" y="809.84" width="10" height="1" fill="#ffffff" fill-opacity="0.35"/><rect x="1463.525" y="818.31" width="10" height="1" fill="#ffffff" fill-opacity="0.35"/><rect x="1503.542" y="729.21" width="10" height="5.08" fill="#fd4563"/><rect x="1503.542" y="734.29" width="10" height="21.47" fill="#1a8ef5"/><rect x="1503.542" y="755.76" width="10" height="8.25" fill="#7a62cf"/><rect x="1503.542" y="764.01" width="10" height="20.90" fill="#fd4563"/><rect x="1503.542" y="784.92" width="10" height="23.95" fill="#2adf96"/><rect x="1503.542" y="808.87" width="10" height="18.73" fill="#1a8ef5"/><rect x="1503.542" y="733.79" width="10" height="1" fill="#ffffff" fill-opacity="0.35"/><rect x="1503.542" y="755.26" width="10" height="1" fill="#ffffff" fill-opacity="0.35"/><rect x="1503.542" y="763.51" width="10" height="1" fill="#ffffff" fill-opacity="0.35"/><rect x="1503.542" y="784.42" width="10" height="1" fill="#ffffff" fill-opacity="0.35"/><rect x="1503.542" y="808.37" width="10" height="1" fill="#ffffff" fill-opacity="0.35"/><rect x="1543.5590000000002" y="714.07" width="10" height="4.75" fill="#fcab33"/><rect x="1543.5590000000002" y="718.81" width="10" height="3.73" fill="#2adf96"/><rect x="1543.5590000000002" y="722.54" width="10" height="12.09" fill="#1a8ef5"/><rect x="1543.5590000000002" y="734.63" width="10" height="19.55" fill="#7a62cf"/><rect x="1543.5590000000002" y="754.18" width="10" height="34.46" fill="#fd4563"/><rect x="1543.5590000000002" y="788.64" width="10" height="26.21" fill="#fcab33"/><rect x="1543.5590000000002" y="814.86" width="10" height="7.57" fill="#2adf96"/><rect x="1543.5590000000002" y="822.43" width="10" height="5.17" fill="#1a8ef5"/><rect x="1543.5590000000002" y="718.31" width="10" height="1" fill="#ffffff" fill-opacity="0.35"/><rect x="1543.5590000000002" y="722.04" width="10" height="1" fill="#ffffff" fill-opacity="0.35"/><rect x="1543.5590000000002" y="734.13" width="10" height="1" fill="#ffffff" fill-opacity="0.35"/><rect x="1543.5590000000002" y="753.68" width="10" height="1" fill="#ffffff" fill-opacity="0.35"/><rect x="1543.5590000000002" y="788.14" width="10" height="1" fill="#ffffff" fill-opacity="0.35"/><rect x="1543.5590000000002" y="814.36" width="10" height="1" fill="#ffffff" fill-opacity="0.35"/><rect x="1543.5590000000002" y="821.93" width="10" height="1" fill="#ffffff" fill-opacity="0.35"/><rect x="1583.576" y="777.23" width="10" height="5.65" fill="#1a8ef5"/><rect x="1583.576" y="782.88" width="10" height="2.60" fill="#7a62cf"/><rect x="1583.576" y="785.48" width="10" height="19.55" fill="#fd4563"/><rect x="1583.576" y="805.03" width="10" height="9.49" fill="#fcab33"/><rect x="1583.576" y="814.52" width="10" height="13.08" fill="#2adf96"/><rect x="1583.576" y="782.38" width="10" height="1" fill="#ffffff" fill-opacity="0.35"/><rect x="1583.576" y="784.98" width="10" height="1" fill="#ffffff" fill-opacity="0.35"/><rect x="1583.576" y="804.53" width="10" height="1" fill="#ffffff" fill-opacity="0.35"/><rect x="1583.576" y="814.02" width="10" height="1" fill="#ffffff" fill-opacity="0.35"/><rect x="1623.5930000000003" y="732.94" width="10" height="4.75" fill="#2adf96"/><rect x="1623.5930000000003" y="737.68" width="10" height="9.94" fill="#1a8ef5"/><rect x="1623.5930000000003" y="747.63" width="10" height="32.20" fill="#7a62cf"/><rect x="1623.5930000000003" y="779.83" width="10" height="20.00" fill="#fd4563"/><rect x="1623.5930000000003" y="799.83" width="10" height="21.81" fill="#2adf96"/><rect x="1623.5930000000003" y="821.64" width="10" height="5.96" fill="#1a8ef5"/><rect x="1623.5930000000003" y="737.18" width="10" height="1" fill="#ffffff" fill-opacity="0.35"/><rect x="1623.5930000000003" y="747.13" width="10" height="1" fill="#ffffff" fill-opacity="0.35"/><rect x="1623.5930000000003" y="779.33" width="10" height="1" fill="#ffffff" fill-opacity="0.35"/><rect x="1623.5930000000003" y="799.33" width="10" height="1" fill="#ffffff" fill-opacity="0.35"/><rect x="1623.5930000000003" y="821.14" width="10" height="1" fill="#ffffff" fill-opacity="0.35"/><rect x="1383.491" y="589.21" width="10" height="13.08" fill="#2adf96"/><rect x="1383.491" y="602.29" width="10" height="2.91" fill="#1a8ef5"/><rect x="1383.491" y="605.19" width="10" height="14.53" fill="#7a62cf"/><rect x="1383.491" y="619.73" width="10" height="22.77" fill="#fcab33"/><rect x="1383.491" y="642.50" width="10" height="149.99" fill="#2adf96"/><rect x="1383.491" y="792.49" width="10" height="35.11" fill="#1a8ef5"/><rect x="1383.491" y="601.79" width="10" height="1" fill="#ffffff" fill-opacity="0.35"/><rect x="1383.491" y="604.69" width="10" height="1" fill="#ffffff" fill-opacity="0.35"/><rect x="1383.491" y="619.23" width="10" height="1" fill="#ffffff" fill-opacity="0.35"/><rect x="1383.491" y="642.00" width="10" height="1" fill="#ffffff" fill-opacity="0.35"/><rect x="1383.491" y="791.99" width="10" height="1" fill="#ffffff" fill-opacity="0.35"/></svg>
<svg class="abs" style="left:0;top:0" width="1719" height="1239">
<circle cx="492.6" cy="1120.5" r="94.75" fill="none" stroke="#fcab33" stroke-width="37.900000000000006"/><line x1="492.60" y1="1044.70" x2="492.60" y2="1005.80" stroke="#fff" stroke-width="2.5"/>
<line x1="492.6" y1="1005" x2="492.6" y2="1046" stroke="#fff" stroke-width="3"/>
<path d="M1181.90,1006.20 A114.1,114.1 0 0 1 1293.14,1094.91 L1255.70,1103.46 A75.7,75.7 0 0 0 1181.90,1044.60 Z" fill="#1a8ef5"/><path d="M1293.14,1094.91 A114.1,114.1 0 0 1 1092.69,1191.44 L1122.72,1167.50 A75.7,75.7 0 0 0 1255.70,1103.46 Z" fill="#2adf96"/><path d="M1092.69,1191.44 A114.1,114.1 0 0 1 1181.90,1006.20 L1181.90,1044.60 A75.7,75.7 0 0 0 1122.72,1167.50 Z" fill="#fcab33"/><line x1="1181.90" y1="1044.60" x2="1181.90" y2="1005.20" stroke="#fff" stroke-width="2.5"/><line x1="1255.70" y1="1103.46" x2="1294.11" y2="1094.69" stroke="#fff" stroke-width="2.5"/><line x1="1122.72" y1="1167.50" x2="1091.91" y2="1192.06" stroke="#fff" stroke-width="2.5"/>
</svg>
<svg class="abs" style="left:0;top:0" width="1719" height="1239"><line x1="664" y1="1026.3" x2="953" y2="1026.3" stroke="#dcdfec" stroke-width="1" stroke-dasharray="3 2"/><line x1="664" y1="1075.6" x2="953" y2="1075.6" stroke="#dcdfec" stroke-width="1" stroke-dasharray="3 2"/><line x1="664" y1="1124.6" x2="953" y2="1124.6" stroke="#dcdfec" stroke-width="1" stroke-dasharray="3 2"/><line x1="664" y1="1174.6" x2="953" y2="1174.6" stroke="#dcdfec" stroke-width="1" stroke-dasharray="3 2"/></svg>
<svg class="abs" style="left:0;top:0" width="1719" height="1239"><line x1="1354" y1="1026.3" x2="1642" y2="1026.3" stroke="#dcdfec" stroke-width="1" stroke-dasharray="3 2"/><line x1="1354" y1="1075.6" x2="1642" y2="1075.6" stroke="#dcdfec" stroke-width="1" stroke-dasharray="3 2"/><line x1="1354" y1="1124.4" x2="1642" y2="1124.4" stroke="#dcdfec" stroke-width="1" stroke-dasharray="3 2"/></svg>
<div class="abs" style="left:671px;top:1043px;width:16px;height:15px;border-radius:3px;background:#1a8ef5"></div>
<div class="abs" style="left:671px;top:1092px;width:16px;height:15px;border-radius:3px;background:#2adf96"></div>
<div class="abs" style="left:671px;top:1142px;width:16px;height:15px;border-radius:3px;background:#fcab33"></div>
<div class="abs" style="left:671px;top:1191px;width:16px;height:15px;border-radius:3px;background:#fd4563"></div>
<div class="abs" style="left:1361px;top:1043px;width:15px;height:15px;border-radius:3px;background:#1a8ef5"></div>
<div class="abs" style="left:1361px;top:1092px;width:15px;height:15px;border-radius:3px;background:#2adf96"></div>
<div class="abs" style="left:1361px;top:1142px;width:15px;height:15px;border-radius:3px;background:#fcab33"></div>
<div class="abs" style="left:293px;top:1231px;width:1426px;height:8px;background:#f0f1f4"></div>
<div class="abs" style="left:296px;top:1234px;width:1408px;height:10px;border-radius:5px;background:#e5e8ed"></div>
<div class="abs" style="left:1714px;top:65px;width:10px;height:858px;border-radius:5px;background:#e5e8ed"></div>
<div class="abs" style="left:293px;top:0;width:1426px;height:62px;background:#fff"></div>
<div class="btn" style="left:456px;top:7px;width:137px;height:38px"></div>
<div class="btn" style="left:600px;top:8px;width:38px;height:36px"></div>
<div class="abs" style="left:667px;top:8px;width:1px;height:36px;background:#e6e8ee"></div>
<div class="btn" style="left:697px;top:7px;width:168px;height:38px"></div>
<svg class="abs" style="left:0;top:0" width="900" height="62"><rect x="610.1" y="19" width="17.6" height="15.6" rx="0.8" fill="#dcdfe7"/><rect x="612.2" y="16.4" width="2.4" height="4.6" rx="1.2" fill="#f5f6f9"/><rect x="612.6" y="17" width="1.6" height="3.4" rx="0.8" fill="#9aa0b4"/><rect x="615.7" y="16.4" width="2.4" height="4.6" rx="1.2" fill="#f5f6f9"/><rect x="616.1" y="17" width="1.6" height="3.4" rx="0.8" fill="#9aa0b4"/><rect x="619.5" y="16.4" width="2.4" height="4.6" rx="1.2" fill="#f5f6f9"/><rect x="619.9" y="17" width="1.6" height="3.4" rx="0.8" fill="#9aa0b4"/><rect x="623.0" y="16.4" width="2.4" height="4.6" rx="1.2" fill="#f5f6f9"/><rect x="623.4" y="17" width="1.6" height="3.4" rx="0.8" fill="#9aa0b4"/><text x='618.8' y='31.9' text-anchor='middle' font-family='Liberation Sans' font-size='11.8' font-weight='bold' fill='#a3a8ba' textLength='9.8' lengthAdjust='spacingAndGlyphs'>31</text><path d="M567.5,24.5 L574,24.5 L570.75,28.5 Z" fill="#555"/></svg>
<div class="abs" style="left:0;top:0;width:293px;height:1239px;background:#fff;box-shadow:2px 0 8px rgba(0,0,0,0.04)"></div>
<div class="abs" style="left:29px;top:15px;width:44px;height:44px;border-radius:3px;background:linear-gradient(135deg,#7882f2,#3f48cc)"></div>
<svg class="abs" style="left:0;top:0" width="293" height="80"><path d="M36.7,48.2 V27.3 H42.5 V29.5 C44,27.8 46,27 48.5,27 C50.5,27 52.3,27.9 53.4,29.5 C55,27.8 57,27 59.3,27 C62.8,27 64.8,29.3 64.8,33 V48.2 H59.2 V34.2 C59.2,32.6 58.4,31.9 57.2,31.9 C55.5,31.9 53.5,33 53.5,35 V48.2 H48.1 V34.2 C48.1,32.6 47.3,31.9 46.1,31.9 C44.4,31.9 42.5,33 42.5,35 V48.2 Z" fill="#fff"/>
<path d="M252.5,30.6 L246.2,36.4 L252.5,42.2" fill="none" stroke="#959bb0" stroke-width="1.9" stroke-linecap="round" stroke-linejoin="round"/>
<path d="M258.4,30.6 L252.6,36.4 L258.4,42.2" fill="none" stroke="#cfd3dd" stroke-width="1.9" stroke-linecap="round" stroke-linejoin="round"/></svg>
<svg class="abs" style="left:0;top:0" width="293" height="1239"><circle cx="38.9" cy="106.5" r="7" fill="none" stroke="#e2e4eb" stroke-width="1.9"/><path d="M35.5,107.3 Q35.6,103.6 39.3,103.1" fill="none" stroke="#e2e4eb" stroke-width="1.5" stroke-linecap="round"/><path d="M44.6,112.6 L47.4,115.4" stroke="#9ea4b7" stroke-width="3.4" stroke-linecap="round"/><rect x="32.3" y="202.5" width="6.3" height="6.3" rx="1.4" fill="#9ea4b7"/><rect x="40.7" y="202.5" width="6.3" height="6.3" rx="1.4" fill="#e2e4eb"/><rect x="32.3" y="210.4" width="6.3" height="6.3" rx="1.4" fill="#e2e4eb"/><rect x="40.7" y="210.4" width="6.3" height="6.3" rx="1.4" fill="#e2e4eb"/><rect x="31.6" y="254.6" width="2.5" height="5.1" rx="1.1" fill="#5966e8"/><rect x="36.3" y="250.9" width="2.3" height="8.8" rx="1.1" fill="#5966e8"/><rect x="40.9" y="247.6" width="2.2" height="12.1" rx="1.1" fill="#b9bff6"/><rect x="45.3" y="252.7" width="2.6" height="7.0" rx="1.1" fill="#5966e8"/><path d="M35.8,354.8 L39.6,349.3 L43.6,354.8" fill="none" stroke="#e2e4eb" stroke-width="1.3" stroke-linejoin="round"/><path d="M31.6,355.1 H47.9 L46.9,358.2 L45.6,364.4 Q45.5,365 44.8,365 H34.9 Q34.3,365 34.1,364.4 L32.5,358.2 Z" fill="#9ea4b7"/><path d="M36.6,358.4 L37.6,362.6 M39.6,358.4 V362.6 M42.7,358.4 L41.6,362.6" stroke="#fff" stroke-width="1.3" stroke-linecap="round"/><path d="M32.4,402 L39.8,405.2 L47.2,402" fill="none" stroke="#e2e4eb" stroke-width="2.6" stroke-linecap="round" stroke-linejoin="round"/><path d="M32.4,406.7 L39.8,409.8 L47.2,406.7" fill="none" stroke="#e2e4eb" stroke-width="2.6" stroke-linecap="round" stroke-linejoin="round"/><path d="M39.8,393 L48.6,396.8 L39.8,400.8 L31.1,396.8 Z" fill="#9ea4b7" stroke="#9ea4b7" stroke-width="0.8" stroke-linejoin="round"/><circle cx="37.1" cy="442.2" r="3.6" fill="#e2e4eb"/><circle cx="45.2" cy="445.6" r="2.6" fill="#e2e4eb"/><path d="M29.2,454.6 Q29.8,447.8 37,447.8 Q44.2,447.8 44.8,454.6 Z" fill="#9ea4b7"/><path d="M45.3,449.2 Q49.6,450.3 49.9,454.6 H46.6 Q46.5,451.3 45.3,449.2 Z" fill="#9ea4b7"/><rect x="30.8" y="542.5" width="17.1" height="3.2" rx="0.6" fill="#9ea4b7"/><rect x="30.8" y="548.5" width="4.7" height="8.2" rx="0.8" fill="#e2e4eb"/><rect x="37.2" y="548.5" width="4.7" height="8.2" rx="0.8" fill="#e2e4eb"/><rect x="43.3" y="548.5" width="4.6" height="8.2" rx="0.8" fill="#e2e4eb"/><path d="M41.4,587.4 V592.9 H47" fill="none" stroke="#9ea4b7" stroke-width="1.8" stroke-linecap="round" stroke-linejoin="round"/><path d="M33.3,595.6 H38.9 V601.1" fill="none" stroke="#9ea4b7" stroke-width="1.8" stroke-linecap="round" stroke-linejoin="round"/><path d="M44.6,589.8 L47.3,587 M32.9,601.1 L35.6,598.5" stroke="#e2e4eb" stroke-width="1.8" stroke-linecap="round"/><path d="M32.6,692.8 H38.2 M30.8,698.2 H35.3 M32.6,703.4 H38.2" stroke="#e2e4eb" stroke-width="2.4" stroke-linecap="round"/><path d="M43.6,690.3 L38.1,698.5 L42.4,698.6 L43.4,704.7 L48.8,696.5 L44.1,696.3 Z" fill="#9ea4b7" stroke="#9ea4b7" stroke-width="0.5" stroke-linejoin="round"/><rect x="35.3" y="741.8" width="2.7" height="5.2" rx="1.2" fill="#e2e4eb"/><rect x="39.8" y="740.0" width="2.7" height="7.0" rx="1.2" fill="#e2e4eb"/><rect x="44.1" y="735.5" width="2.9" height="11.5" rx="1.2" fill="#e2e4eb"/><path d="M32.6,735.2 V748.3 Q32.6,749.9 34.2,749.9 H47.2" fill="none" stroke="#9ea4b7" stroke-width="1.7" stroke-linecap="round"/><rect x="31" y="778.8" width="17.6" height="2.9" rx="0.4" fill="#e2e4eb"/><path d="M32.6,782 H46.8 V793.6 Q46.8,794.8 45.6,794.8 H33.8 Q32.6,794.8 32.6,793.6 Z" fill="#9ea4b7"/><rect x="36.9" y="785.1" width="5.8" height="1.9" rx="0.9" fill="#fff"/><circle cx="39.8" cy="829.8" r="5.5" fill="#e2e4eb"/><path d="M43.9,823.6 A7.6,7.6 0 0 1 34.6,834.6 Q33.4,834.2 32.3,836.2" fill="none" stroke="#9ea4b7" stroke-width="1.8" stroke-linecap="round"/><path d="M39.7,836.5 V839.2 M36.6,840.3 H43" stroke="#9ea4b7" stroke-width="1.8" stroke-linecap="round"/><path d="M36.4,869.7 H45.8 V879" fill="none" stroke="#e2e4eb" stroke-width="2.4" stroke-linejoin="round"/><path d="M33.1,873.1 V882.5 H42.3" fill="none" stroke="#e2e4eb" stroke-width="2.4" stroke-linejoin="round"/><rect x="36.2" y="873.1" width="6.1" height="6.1" rx="1" fill="#9ea4b7"/><path fill-rule="evenodd" fill="#9ea4b7" d="M39.35,912.1 L42.3,914.4 L45.9,914.4 L45.9,918 L47.9,920.5 L45.9,923.1 L45.9,926.8 L42.3,926.8 L39.35,929.3 L36.5,926.8 L33,926.8 L33,923.1 L30.7,920.5 L33,918 L33,914.4 L36.5,914.4 Z M39.4,917.6 A2.9,2.9 0 1 0 39.41,917.6 Z"/><path d="M254.6,918.4 L259.4,923.3 L264.2,918.4" fill="none" stroke="#c4c8d4" stroke-width="1.3" stroke-linecap="round" stroke-linejoin="round"/></svg>
<svg class="abs" style="left:0;top:0" width="1719" height="1239"><g transform="translate(0,0)" fill="none" stroke="#3a3a3a" stroke-width="1.9" stroke-linecap="round" stroke-linejoin="round"><path d="M1624.15,317.6 V329.3"/><path d="M1619.4,325 L1624.15,329.7 L1628.9,325"/><path d="M1616.4,327.6 V331.6 Q1616.4,334.8 1619.6,334.8 H1629 Q1632.2,334.8 1632.2,331.6 V327.6"/></g><g transform="translate(-690,931.1)" fill="none" stroke="#3a3a3a" stroke-width="1.9" stroke-linecap="round" stroke-linejoin="round"><path d="M1624.15,317.6 V329.3"/><path d="M1619.4,325 L1624.15,329.7 L1628.9,325"/><path d="M1616.4,327.6 V331.6 Q1616.4,334.8 1619.6,334.8 H1629 Q1632.2,334.8 1632.2,331.6 V327.6"/></g><g transform="translate(0,931.1)" fill="none" stroke="#3a3a3a" stroke-width="1.9" stroke-linecap="round" stroke-linejoin="round"><path d="M1624.15,317.6 V329.3"/><path d="M1619.4,325 L1624.15,329.7 L1628.9,325"/><path d="M1616.4,327.6 V331.6 Q1616.4,334.8 1619.6,334.8 H1629 Q1632.2,334.8 1632.2,331.6 V327.6"/></g></svg>
<div class="abs" style="left:0;top:0;width:1719px;height:1px;background:#8b3135"></div>
<div class="abs" style="left:0;top:0;width:1px;height:1239px;background:#000"></div>
<div class="abs" style="left:1647px;top:1167px;width:53px;height:53px;border-radius:50%;background:#fe666b;box-shadow:0 2px 8px rgba(0,0,0,0.12)"></div>
<svg class="abs" style="left:0;top:0" width="1719" height="1239"><path d="M1663.5,1180 H1683.5 A1.6,1.6 0 0 1 1685.1,1181.6 V1206.4 L1680.5,1203.6 H1663.5 A1.6,1.6 0 0 1 1661.9,1202 V1181.6 A1.6,1.6 0 0 1 1663.5,1180 Z" fill="#fff"/><path d="M1665,1196.5 Q1673.5,1202.5 1682,1196.5" fill="none" stroke="#fe666b" stroke-width="1.3" stroke-linecap="round"/></svg>
<div class="t" style="left:63.87px;top:99.80px;font-size:15.5px;font-weight:normal;color:#3b3f51;transform:scaleX(1.1298);letter-spacing:0.000px;">Search</div>
<div class="t" style="left:27.80px;top:163.96px;font-size:12px;font-weight:normal;color:#a0a5b8;transform:scaleX(1.0000);letter-spacing:0.567px;">GENERAL</div>
<div class="t" style="left:63.88px;top:201.90px;font-size:15.5px;font-weight:normal;color:#3b3f51;transform:scaleX(1.1250);letter-spacing:0.000px;">Home</div>
<div class="t" style="left:63.95px;top:246.90px;font-size:15.5px;font-weight:normal;color:#5966e8;transform:scaleX(1.1486);letter-spacing:0.000px;">Dashboard</div>
<div class="t" style="left:28.80px;top:311.86px;font-size:12px;font-weight:normal;color:#a0a5b8;transform:scaleX(1.0000);letter-spacing:0.919px;">ORDERS &amp; SHIPPING</div>
<div class="t" style="left:63.70px;top:349.70px;font-size:15.5px;font-weight:normal;color:#3b3f51;transform:scaleX(1.1022);letter-spacing:0.000px;">Orders</div>
<div class="t" style="left:63.70px;top:394.80px;font-size:15.5px;font-weight:normal;color:#3b3f51;transform:scaleX(1.0977);letter-spacing:0.000px;">Labels &amp; Manifests</div>
<div class="t" style="left:63.67px;top:438.70px;font-size:15.5px;font-weight:normal;color:#3b3f51;transform:scaleX(1.1338);letter-spacing:0.000px;">Customers</div>
<div class="t" style="left:28.10px;top:503.66px;font-size:12px;font-weight:normal;color:#a0a5b8;transform:scaleX(1.0000);letter-spacing:1.105px;">PRODUCTS &amp; INVENTORY</div>
<div class="t" style="left:63.67px;top:542.10px;font-size:15.5px;font-weight:normal;color:#3b3f51;transform:scaleX(1.1250);letter-spacing:0.000px;">Products</div>
<div class="t" style="left:63.65px;top:587.20px;font-size:15.5px;font-weight:normal;color:#3b3f51;transform:scaleX(1.1460);letter-spacing:0.000px;">Product merge</div>
<div class="t" style="left:29.00px;top:651.66px;font-size:12px;font-weight:normal;color:#a0a5b8;transform:scaleX(1.0000);letter-spacing:0.825px;">TOOLS</div>
<div class="t" style="left:65.20px;top:689.80px;font-size:15.5px;font-weight:normal;color:#3b3f51;transform:scaleX(1.1615);letter-spacing:0.000px;">Automation</div>
<div class="t" style="left:64.11px;top:734.90px;font-size:15.5px;font-weight:normal;color:#3b3f51;transform:scaleX(1.0906);letter-spacing:0.000px;">Reports</div>
<div class="t" style="left:64.10px;top:778.90px;font-size:15.5px;font-weight:normal;color:#3b3f51;transform:scaleX(1.0972);letter-spacing:0.000px;">Purchases</div>
<div class="t" style="left:63.78px;top:824.10px;font-size:15.5px;font-weight:normal;color:#3b3f51;transform:scaleX(1.1238);letter-spacing:0.000px;">Suppliers</div>
<div class="t" style="left:63.74px;top:869.20px;font-size:15.5px;font-weight:normal;color:#3b3f51;transform:scaleX(1.1587);letter-spacing:0.000px;">Integrations</div>
<div class="t" style="left:63.78px;top:913.40px;font-size:15.5px;font-weight:normal;color:#3b3f51;transform:scaleX(1.1218);letter-spacing:0.000px;">Settings</div>
<div class="t" style="left:335.25px;top:18.80px;font-size:15.5px;font-weight:normal;color:#5b607a;transform:scaleX(1.0510);letter-spacing:0.000px;">Filter By Date:</div>
<div class="t" style="left:473.74px;top:19.07px;font-size:14px;font-weight:normal;color:#4f4f4f;transform:scaleX(1.0559);letter-spacing:0.000px;">Last Month</div>
<div class="t" style="left:715.42px;top:18.97px;font-size:14px;font-weight:normal;color:#555555;transform:scaleX(1.0824);letter-spacing:0.000px;">Dashboard Options</div>
<div class="t" style="left:355.10px;top:127.90px;font-size:17.4px;font-weight:normal;color:#3f3f3f;transform:scaleX(1.1038);letter-spacing:0.000px;">Today's Active Order Status</div>
<div class="t" style="left:452.68px;top:180.33px;font-size:17px;font-weight:normal;color:#444444;transform:scaleX(1.1212);letter-spacing:0.000px;">New</div>
<div class="t" style="left:460.15px;top:203.13px;font-size:26px;font-weight:bold;color:#1e9bef;transform:scaleX(0.9000);letter-spacing:-1.800px;">61</div>
<div class="t" style="left:694.85px;top:180.33px;font-size:17px;font-weight:normal;color:#444444;transform:scaleX(1.1985);letter-spacing:0.000px;">Prepared</div>
<div class="t" style="left:729.35px;top:203.13px;font-size:26px;font-weight:bold;color:#1e9bef;transform:scaleX(0.9933);letter-spacing:0.000px;">4</div>
<div class="t" style="left:949.52px;top:180.33px;font-size:17px;font-weight:normal;color:#444444;transform:scaleX(1.1814);letter-spacing:0.000px;">In-Progress</div>
<div class="t" style="left:985.85px;top:203.13px;font-size:26px;font-weight:bold;color:#1e9bef;transform:scaleX(1.1179);letter-spacing:0.000px;">48</div>
<div class="t" style="left:1229.12px;top:180.33px;font-size:17px;font-weight:normal;color:#444444;transform:scaleX(1.1836);letter-spacing:0.000px;">Pending</div>
<div class="t" style="left:1250.83px;top:203.13px;font-size:26px;font-weight:bold;color:#1e9bef;transform:scaleX(1.0741);letter-spacing:0.000px;">20</div>
<div class="t" style="left:1494.01px;top:180.33px;font-size:17px;font-weight:normal;color:#444444;transform:scaleX(1.1869);letter-spacing:0.000px;">Shipped</div>
<div class="t" style="left:1509.00px;top:203.13px;font-size:26px;font-weight:bold;color:#1e9bef;transform:scaleX(1.0419);letter-spacing:0.000px;">428</div>
<div class="t" style="left:358.70px;top:316.27px;font-size:18.5px;font-weight:normal;color:#3f3f3f;transform:scaleX(1.0911);letter-spacing:0.000px;">Total Sales</div>
<div class="t" style="left:358.01px;top:344.25px;font-size:25.5px;font-weight:bold;color:#3d3d3d;transform:scaleX(0.9948);letter-spacing:0.000px;">USD 93,347.37</div>
<div class="t" style="left:358.70px;top:417.31px;font-size:19.4px;font-weight:normal;color:#3f3f3f;transform:scaleX(1.0961);letter-spacing:0.000px;">Total Sales Per Channel</div>
<div class="t" style="left:385.30px;top:455.71px;font-size:17.5px;font-weight:normal;-webkit-text-stroke:0.65px #3c3c3c;color:#3c3c3c;transform:scaleX(1.0830);letter-spacing:0.000px;">Wix clothing</div>
<div class="t" style="left:357.37px;top:483.08px;font-size:16px;font-weight:normal;-webkit-text-stroke:0.65px #3c3c3c;color:#3c3c3c;transform:scaleX(1.0275);letter-spacing:0.000px;">USD 12,356.04</div>
<div class="t" style="left:542.70px;top:455.71px;font-size:17.5px;font-weight:normal;-webkit-text-stroke:0.65px #3c3c3c;color:#3c3c3c;transform:scaleX(1.0458);letter-spacing:0.000px;">Wix phone</div>
<div class="t" style="left:542.70px;top:479.61px;font-size:17.5px;font-weight:normal;-webkit-text-stroke:0.65px #3c3c3c;color:#3c3c3c;transform:scaleX(1.0435);letter-spacing:0.000px;">cases</div>
<div class="t" style="left:517.66px;top:505.18px;font-size:16px;font-weight:normal;-webkit-text-stroke:0.65px #3c3c3c;color:#3c3c3c;transform:scaleX(1.0398);letter-spacing:0.000px;">USD 12,304.00</div>
<div class="t" style="left:717.10px;top:455.71px;font-size:17.5px;font-weight:normal;-webkit-text-stroke:0.65px #3c3c3c;color:#3c3c3c;transform:scaleX(1.0300);letter-spacing:0.000px;">eBay</div>
<div class="t" style="left:689.41px;top:482.98px;font-size:16px;font-weight:normal;-webkit-text-stroke:0.65px #3c3c3c;color:#3c3c3c;transform:scaleX(0.9869);letter-spacing:0.000px;">USD 11,444.18</div>
<div class="t" style="left:885.00px;top:455.71px;font-size:17.5px;font-weight:normal;-webkit-text-stroke:0.65px #3c3c3c;color:#3c3c3c;transform:scaleX(1.0000);letter-spacing:0.000px;">Amazon US</div>
<div class="t" style="left:856.58px;top:482.98px;font-size:16px;font-weight:normal;-webkit-text-stroke:0.65px #3c3c3c;color:#3c3c3c;transform:scaleX(1.0220);letter-spacing:0.000px;">USD 10,902.24</div>
<div class="t" style="left:1092.90px;top:455.71px;font-size:17.5px;font-weight:normal;-webkit-text-stroke:0.65px #3c3c3c;color:#3c3c3c;transform:scaleX(0.9957);letter-spacing:0.000px;">Amazon UK</div>
<div class="t" style="left:1064.46px;top:482.98px;font-size:16px;font-weight:normal;-webkit-text-stroke:0.65px #3c3c3c;color:#3c3c3c;transform:scaleX(1.0450);letter-spacing:0.000px;">USD 10,094.04</div>
<div class="t" style="left:1311.60px;top:455.71px;font-size:17.5px;font-weight:normal;-webkit-text-stroke:0.65px #3c3c3c;color:#3c3c3c;transform:scaleX(1.0975);letter-spacing:0.000px;">Shopify clothing</div>
<div class="t" style="left:1284.24px;top:482.98px;font-size:16px;font-weight:normal;-webkit-text-stroke:0.65px #3c3c3c;color:#3c3c3c;transform:scaleX(1.0550);letter-spacing:0.000px;">USD 5,379.84</div>
<div class="t" style="left:1547.69px;top:455.71px;font-size:17.5px;font-weight:normal;-webkit-text-stroke:0.65px #3c3c3c;color:#3c3c3c;transform:scaleX(1.0091);letter-spacing:0.000px;">Etsy</div>
<div class="t" style="left:1520.78px;top:482.98px;font-size:16px;font-weight:normal;-webkit-text-stroke:0.65px #3c3c3c;color:#3c3c3c;transform:scaleX(1.0190);letter-spacing:0.000px;">USD 5,231.04</div>
<div class="t" style="left:382.08px;top:819.04px;font-size:12.5px;font-weight:normal;color:#a5a8bc;transform:scaleX(1.0041);letter-spacing:0.000px;">USD 0.00</div>
<div class="t" style="left:361.00px;top:777.42px;font-size:12.5px;font-weight:normal;color:#a5a8bc;transform:scaleX(1.0041);letter-spacing:0.000px;">USD 1000.00</div>
<div class="t" style="left:361.00px;top:735.80px;font-size:12.5px;font-weight:normal;color:#a5a8bc;transform:scaleX(1.0041);letter-spacing:0.000px;">USD 2000.00</div>
<div class="t" style="left:361.00px;top:694.18px;font-size:12.5px;font-weight:normal;color:#a5a8bc;transform:scaleX(1.0041);letter-spacing:0.000px;">USD 3000.00</div>
<div class="t" style="left:361.00px;top:652.56px;font-size:12.5px;font-weight:normal;color:#a5a8bc;transform:scaleX(1.0041);letter-spacing:0.000px;">USD 4000.00</div>
<div class="t" style="left:361.00px;top:610.94px;font-size:12.5px;font-weight:normal;color:#a5a8bc;transform:scaleX(1.0041);letter-spacing:0.000px;">USD 5000.00</div>
<div class="t" style="left:361.00px;top:569.32px;font-size:12.5px;font-weight:normal;color:#a5a8bc;transform:scaleX(1.0041);letter-spacing:0.000px;">USD 6000.00</div>
<div class="t" style="left:460.65px;top:842.75px;font-size:14.5px;font-weight:normal;color:#3d3d3d;transform:scaleX(0.9313);letter-spacing:0.000px;">01</div>
<div class="t" style="left:500.67px;top:842.75px;font-size:14.5px;font-weight:normal;color:#3d3d3d;transform:scaleX(0.9313);letter-spacing:0.000px;">02</div>
<div class="t" style="left:540.68px;top:842.75px;font-size:14.5px;font-weight:normal;color:#3d3d3d;transform:scaleX(0.9313);letter-spacing:0.000px;">03</div>
<div class="t" style="left:580.70px;top:842.75px;font-size:14.5px;font-weight:normal;color:#3d3d3d;transform:scaleX(0.9313);letter-spacing:0.000px;">04</div>
<div class="t" style="left:620.72px;top:842.75px;font-size:14.5px;font-weight:normal;color:#3d3d3d;transform:scaleX(0.9313);letter-spacing:0.000px;">05</div>
<div class="t" style="left:660.74px;top:842.75px;font-size:14.5px;font-weight:normal;color:#3d3d3d;transform:scaleX(0.9313);letter-spacing:0.000px;">06</div>
<div class="t" style="left:700.75px;top:842.75px;font-size:14.5px;font-weight:normal;color:#3d3d3d;transform:scaleX(0.9313);letter-spacing:0.000px;">07</div>
<div class="t" style="left:740.77px;top:842.75px;font-size:14.5px;font-weight:normal;color:#3d3d3d;transform:scaleX(0.9313);letter-spacing:0.000px;">08</div>
<div class="t" style="left:780.79px;top:842.75px;font-size:14.5px;font-weight:normal;color:#3d3d3d;transform:scaleX(0.9313);letter-spacing:0.000px;">09</div>
<div class="t" style="left:820.34px;top:842.75px;font-size:14.5px;font-weight:normal;color:#3d3d3d;transform:scaleX(0.9313);letter-spacing:0.000px;">10</div>
<div class="t" style="left:860.82px;top:842.75px;font-size:14.5px;font-weight:normal;color:#3d3d3d;transform:scaleX(0.9313);letter-spacing:0.000px;">11</div>
<div class="t" style="left:900.37px;top:842.75px;font-size:14.5px;font-weight:normal;color:#3d3d3d;transform:scaleX(0.9313);letter-spacing:0.000px;">12</div>
<div class="t" style="left:940.39px;top:842.75px;font-size:14.5px;font-weight:normal;color:#3d3d3d;transform:scaleX(0.9313);letter-spacing:0.000px;">13</div>
<div class="t" style="left:980.41px;top:842.75px;font-size:14.5px;font-weight:normal;color:#3d3d3d;transform:scaleX(0.9313);letter-spacing:0.000px;">14</div>
<div class="t" style="left:1020.42px;top:842.75px;font-size:14.5px;font-weight:normal;color:#3d3d3d;transform:scaleX(0.9313);letter-spacing:0.000px;">15</div>
<div class="t" style="left:1060.44px;top:842.75px;font-size:14.5px;font-weight:normal;color:#3d3d3d;transform:scaleX(0.9313);letter-spacing:0.000px;">16</div>
<div class="t" style="left:1100.46px;top:842.75px;font-size:14.5px;font-weight:normal;color:#3d3d3d;transform:scaleX(0.9313);letter-spacing:0.000px;">17</div>
<div class="t" style="left:1140.47px;top:842.75px;font-size:14.5px;font-weight:normal;color:#3d3d3d;transform:scaleX(0.9313);letter-spacing:0.000px;">18</div>
<div class="t" style="left:1180.49px;top:842.75px;font-size:14.5px;font-weight:normal;color:#3d3d3d;transform:scaleX(0.9313);letter-spacing:0.000px;">19</div>
<div class="t" style="left:1220.51px;top:842.75px;font-size:14.5px;font-weight:normal;color:#3d3d3d;transform:scaleX(0.9313);letter-spacing:0.000px;">20</div>
<div class="t" style="left:1260.52px;top:842.75px;font-size:14.5px;font-weight:normal;color:#3d3d3d;transform:scaleX(0.9313);letter-spacing:0.000px;">21</div>
<div class="t" style="left:1300.54px;top:842.75px;font-size:14.5px;font-weight:normal;color:#3d3d3d;transform:scaleX(0.9313);letter-spacing:0.000px;">22</div>
<div class="t" style="left:1340.56px;top:842.75px;font-size:14.5px;font-weight:normal;color:#3d3d3d;transform:scaleX(0.9313);letter-spacing:0.000px;">23</div>
<div class="t" style="left:1380.58px;top:842.75px;font-size:14.5px;font-weight:normal;color:#3d3d3d;transform:scaleX(0.9313);letter-spacing:0.000px;">24</div>
<div class="t" style="left:1420.59px;top:842.75px;font-size:14.5px;font-weight:normal;color:#3d3d3d;transform:scaleX(0.9313);letter-spacing:0.000px;">25</div>
<div class="t" style="left:1460.61px;top:842.75px;font-size:14.5px;font-weight:normal;color:#3d3d3d;transform:scaleX(0.9313);letter-spacing:0.000px;">26</div>
<div class="t" style="left:1500.63px;top:842.75px;font-size:14.5px;font-weight:normal;color:#3d3d3d;transform:scaleX(0.9313);letter-spacing:0.000px;">27</div>
<div class="t" style="left:1540.64px;top:842.75px;font-size:14.5px;font-weight:normal;color:#3d3d3d;transform:scaleX(0.9313);letter-spacing:0.000px;">28</div>
<div class="t" style="left:1580.66px;top:842.75px;font-size:14.5px;font-weight:normal;color:#3d3d3d;transform:scaleX(0.9313);letter-spacing:0.000px;">29</div>
<div class="t" style="left:1620.68px;top:842.75px;font-size:14.5px;font-weight:normal;color:#3d3d3d;transform:scaleX(0.9313);letter-spacing:0.000px;">30</div>
<div class="t" style="left:358.60px;top:947.47px;font-size:18.5px;font-weight:normal;color:#3f3f3f;transform:scaleX(1.1022);letter-spacing:0.000px;">Active Order Age</div>
<div class="t" style="left:663.40px;top:999.78px;font-size:16px;font-weight:normal;color:#9b9eb9;transform:scaleX(1.1000);letter-spacing:0.000px;">Status</div>
<div class="t" style="left:840.31px;top:999.78px;font-size:16px;font-weight:normal;color:#9b9eb9;transform:scaleX(1.0941);letter-spacing:0.000px;">Product Count</div>
<div class="t" style="left:692.26px;top:1041.73px;font-size:17px;font-weight:normal;-webkit-text-stroke:0.65px #3b3b3b;color:#3b3b3b;transform:scaleX(0.9432);letter-spacing:0.000px;">1 Day</div>
<div class="t" style="left:935.20px;top:1041.73px;font-size:17px;font-weight:normal;-webkit-text-stroke:0.65px #3b3b3b;color:#3b3b3b;transform:scaleX(1.0333);letter-spacing:0.000px;">0</div>
<div class="t" style="left:693.20px;top:1090.43px;font-size:17px;font-weight:normal;-webkit-text-stroke:0.65px #3b3b3b;color:#3b3b3b;transform:scaleX(1.0189);letter-spacing:0.000px;">2 Days</div>
<div class="t" style="left:935.20px;top:1090.43px;font-size:17px;font-weight:normal;-webkit-text-stroke:0.65px #3b3b3b;color:#3b3b3b;transform:scaleX(1.0333);letter-spacing:0.000px;">0</div>
<div class="t" style="left:693.20px;top:1140.63px;font-size:17px;font-weight:normal;-webkit-text-stroke:0.65px #3b3b3b;color:#3b3b3b;transform:scaleX(1.0333);letter-spacing:0.000px;">3+ Days</div>
<div class="t" style="left:927.00px;top:1140.63px;font-size:17px;font-weight:normal;-webkit-text-stroke:0.65px #3b3b3b;color:#3b3b3b;transform:scaleX(0.9474);letter-spacing:0.000px;">22</div>
<div class="t" style="left:693.20px;top:1189.63px;font-size:17px;font-weight:normal;-webkit-text-stroke:0.65px #3b3b3b;color:#3b3b3b;transform:scaleX(1.0877);letter-spacing:0.000px;">Overdue</div>
<div class="t" style="left:935.20px;top:1189.63px;font-size:17px;font-weight:normal;-webkit-text-stroke:0.65px #3b3b3b;color:#3b3b3b;transform:scaleX(1.0333);letter-spacing:0.000px;">0</div>
<div class="t" style="left:1045.62px;top:948.07px;font-size:18.5px;font-weight:normal;color:#3f3f3f;transform:scaleX(1.1406);letter-spacing:0.000px;">Integration Status</div>
<div class="t" style="left:1353.40px;top:999.78px;font-size:16px;font-weight:normal;color:#9b9eb9;transform:scaleX(1.1000);letter-spacing:0.000px;">Status</div>
<div class="t" style="left:1530.31px;top:999.78px;font-size:16px;font-weight:normal;color:#9b9eb9;transform:scaleX(1.0941);letter-spacing:0.000px;">Product Count</div>
<div class="t" style="left:1381.76px;top:1041.73px;font-size:17px;font-weight:normal;-webkit-text-stroke:0.65px #3b3b3b;color:#3b3b3b;transform:scaleX(1.0367);letter-spacing:0.000px;">Live</div>
<div class="t" style="left:1625.00px;top:1041.73px;font-size:17px;font-weight:normal;-webkit-text-stroke:0.65px #3b3b3b;color:#3b3b3b;transform:scaleX(1.0111);letter-spacing:0.000px;">6</div>
<div class="t" style="left:1381.63px;top:1090.43px;font-size:17px;font-weight:normal;-webkit-text-stroke:0.65px #3b3b3b;color:#3b3b3b;transform:scaleX(1.1734);letter-spacing:0.000px;">Integrating</div>
<div class="t" style="left:1619.30px;top:1090.43px;font-size:17px;font-weight:normal;-webkit-text-stroke:0.65px #3b3b3b;color:#3b3b3b;transform:scaleX(0.9000);letter-spacing:-1.900px;">12</div>
<div class="t" style="left:1381.72px;top:1140.34px;font-size:17px;font-weight:normal;-webkit-text-stroke:0.65px #3b3b3b;color:#3b3b3b;transform:scaleX(1.0764);letter-spacing:0.000px;">Errored</div>
<div class="t" style="left:1617.80px;top:1140.34px;font-size:17px;font-weight:normal;-webkit-text-stroke:0.65px #3b3b3b;color:#3b3b3b;transform:scaleX(0.9000);letter-spacing:-0.400px;">10</div>
</body></html>
